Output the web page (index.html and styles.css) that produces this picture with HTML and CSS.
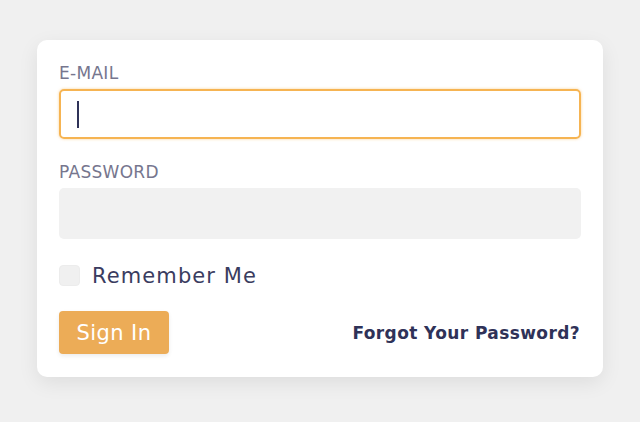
FILE: index.html
```html
<!DOCTYPE html>
<html>
<head>
<meta charset="utf-8">
<link rel="stylesheet" href="styles.css">
</head>
<body>
<div class="page">
  <form class="card">
    <label class="field-label">E-MAIL</label>
    <div class="input input-focus"><span class="caret"></span></div>
    <label class="field-label label-pw">PASSWORD</label>
    <div class="input input-filled"></div>
    <div class="remember">
      <span class="checkbox"></span>
      <span class="remember-text">Remember Me</span>
    </div>
    <div class="actions">
      <button type="button" class="btn">Sign In</button>
      <a class="forgot">Forgot Your Password?</a>
    </div>
  </form>
</div>
</body>
</html>
```

FILE: styles.css
```css
* { box-sizing: border-box; }
html, body { margin: 0; padding: 0; }
body {
  background: #f0f0f0;
  font-family: "DejaVu Sans", "Noto Sans", sans-serif;
  width: 640px;
  height: 422px;
  overflow: hidden;
}
.page {
  padding-top: 40px;
  display: flex;
  justify-content: center;
}
.card {
  width: 566px;
  background: #ffffff;
  border-radius: 10px;
  box-shadow: 0 6px 20px rgba(0,0,0,0.08);
  padding: 23px 22px 23px 22px;
  display: flex;
  flex-direction: column;
}
.field-label {
  display: block;
  font-size: 17px;
  line-height: 20px;
  color: #76768e;
  letter-spacing: 0.3px;
  margin-bottom: 6px;
}
.label-pw { margin-top: 23px; margin-bottom: 6px; }
.input {
  height: 51px;
  border-radius: 5px;
  position: relative;
}
.input-focus {
  border: 2px solid #f6b452;
  box-shadow: 0 0 3px rgba(246,180,82,0.6);
  height: 50px;
}
.caret {
  position: absolute;
  left: 16px;
  top: 10px;
  width: 2px;
  height: 27px;
  background: #2f3258;
}
.input-filled {
  background: #f1f1f1;
}
.remember {
  margin-top: 26px;
  display: flex;
  align-items: center;
  gap: 12px;
  height: 21px;
}
.checkbox {
  width: 21px;
  height: 21px;
  border-radius: 4px;
  background: #f0f0f0;
  border: 1px solid #ececec;
}
.remember-text {
  font-size: 21px;
  color: #3a3c60;
  letter-spacing: 1.1px;
}
.actions {
  margin-top: 25px;
  display: flex;
  justify-content: space-between;
  align-items: center;
}
.btn {
  width: 110px;
  height: 43px;
  border: none;
  border-radius: 4px;
  background: #ecac57;
  color: #ffffff;
  font-family: inherit;
  font-size: 21px;
  letter-spacing: 0.4px;
  box-shadow: 0 2px 4px rgba(0,0,0,0.08);
  padding: 0;
}
.forgot {
  font-size: 17px;
  font-weight: 700;
  color: #2f3258;
  letter-spacing: 0.4px;
  margin-right: 1px;
}
```
